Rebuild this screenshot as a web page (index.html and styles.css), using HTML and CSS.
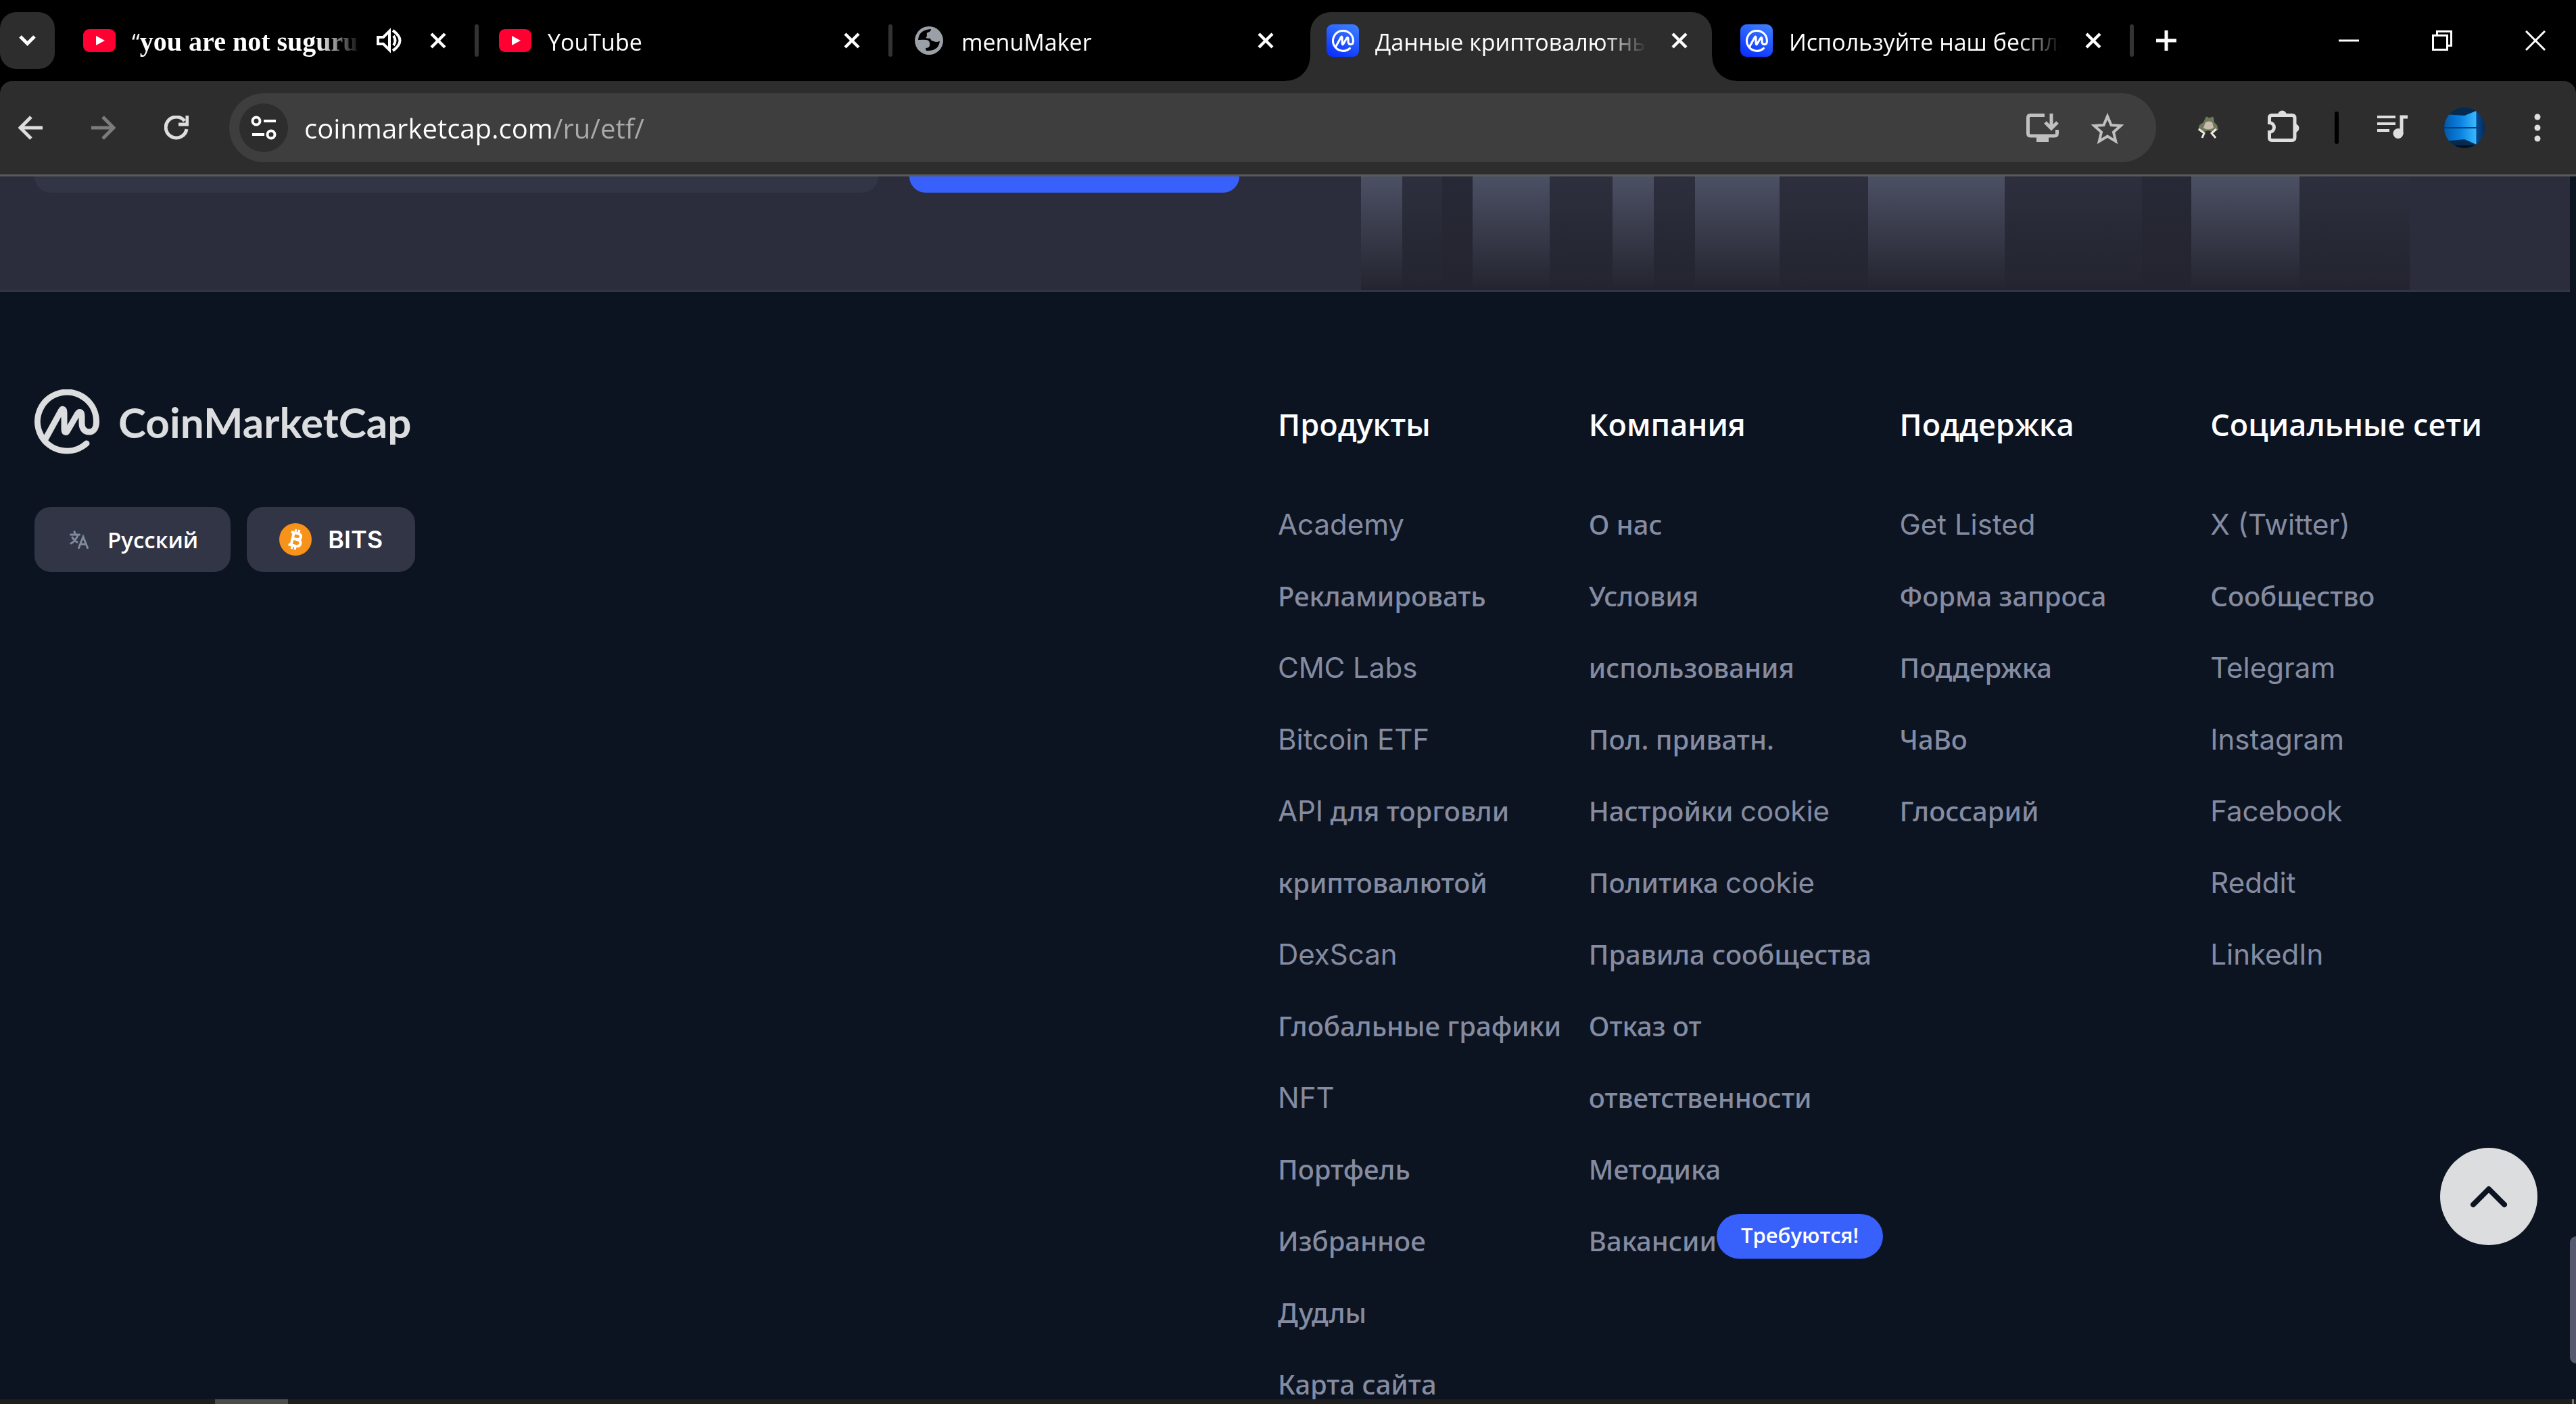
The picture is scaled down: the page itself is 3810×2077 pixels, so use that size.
FILE: index.html
```html
<!DOCTYPE html>
<html lang="ru">
<head>
<meta charset="utf-8">
<title>Данные криптовалютных ETF</title>
<link rel="stylesheet" href="styles.css">
</head>
<body>
<svg class="defs" aria-hidden="true">
  <symbol id="x" viewBox="0 0 24 24"><path d="M2 2 22 22M22 2 2 22" stroke="currentColor" stroke-width="4.5" fill="none"/></symbol>
  <symbol id="yt" viewBox="0 0 48 48"><rect y="7" width="48" height="34" rx="9" fill="#ff0033"/><path d="M19 17v14l13-7z" fill="#fff"/></symbol>
  <symbol id="mark" viewBox="0 0 96 96"><path d="M77 80A43.500 43.500 0 1 1 91.500 48c0 9-4 15-10.500 15C74 63 70 58 70 50V40c0-8-4-8-7-3L49 61c-2 4-5 3-5-2V35c0-7-3-7-5-3L17 72" fill="none" stroke="currentColor" stroke-width="9" stroke-linecap="round" stroke-linejoin="round"/></symbol>
  <linearGradient id="cmcbg" x1="0.700" y1="0" x2="0.300" y2="1"><stop offset="0" stop-color="#3a7bff"/><stop offset="1" stop-color="#0b32ff"/></linearGradient>
  <symbol id="cmc" viewBox="0 0 48 48"><rect width="48" height="48" rx="9" fill="url(#cmcbg)"/><svg x="8" y="8" width="33" height="33" color="#fff"><use href="#mark"/></svg></symbol>
</svg>

<header class="browser">
  <div class="tabstrip">
    <button class="tab-search" aria-label="Поиск вкладок"><svg width="27" height="18" viewBox="0 0 27 18"><path d="m3 3 10.500 10.500L24 3" fill="none" stroke="#fff" stroke-width="5"/></svg></button>
    <div class="tab first">
      <svg class="favicon"><use href="#yt"/></svg>
      <span class="tab-title"><span>“</span><b class="serif">you are not suguru</b></span>
      <svg class="audio" viewBox="0 0 48 48"><path d="M7 19h8l9-9v28l-9-9H7z" fill="none" stroke="#fff" stroke-width="4"/><path d="M30 17q5 7 0 14M29 9q21 15 0 30" fill="none" stroke="#fff" stroke-width="4"/></svg>
      <button class="close" aria-label="Закрыть"><svg><use href="#x"/></svg></button>
    </div>
    <div class="tab">
      <svg class="favicon"><use href="#yt"/></svg>
      <span class="tab-title">YouTube</span>
      <button class="close" aria-label="Закрыть"><svg><use href="#x"/></svg></button>
    </div>
    <div class="tab plain">
      <svg class="favicon" viewBox="0 0 48 48"><circle cx="24" cy="24" r="21" fill="#9aa0a6"/><path d="M8 23Q9 8 27 7q0 4-5 5-2 1-1 4 0 3-2 4 2 1 7 1 1 4 5 4 3 2 9 0-2 15-20 14-1-2-1-4 6 0 6-4 1-4-2-7-2-2-15-1z" fill="#000"/></svg>
      <span class="tab-title">menuMaker</span>
      <button class="close" aria-label="Закрыть"><svg><use href="#x"/></svg></button>
    </div>
    <div class="tab active">
      <svg class="favicon"><use href="#cmc"/></svg>
      <span class="tab-title">Данные криптовалютны</span>
      <button class="close" aria-label="Закрыть"><svg><use href="#x"/></svg></button>
    </div>
    <div class="tab">
      <svg class="favicon"><use href="#cmc"/></svg>
      <span class="tab-title">Используйте наш беспла</span>
      <button class="close" aria-label="Закрыть"><svg><use href="#x"/></svg></button>
    </div>
    <button class="new-tab" aria-label="Новая вкладка"><svg width="30" height="30"><path d="M15 0v30M0 15h30" stroke="#fff" stroke-width="5"/></svg></button>
    <div class="window-controls">
      <button aria-label="Свернуть"><svg width="30" height="30"><path d="M0 15h30" stroke="#fff" stroke-width="3"/></svg></button>
      <button aria-label="Восстановить"><svg width="30" height="30" fill="none" stroke="#fff" stroke-width="3"><path d="M1.500 7.500h21v21h-21zM7.500 7V1.500h21v21H23"/></svg></button>
      <button aria-label="Закрыть окно"><svg width="30" height="30"><path d="m1 1 28 28M29 1 1 29" stroke="#fff" stroke-width="3"/></svg></button>
    </div>
  </div>

  <div class="toolbar">
    <div class="nav">
      <button aria-label="Назад"><svg width="36" height="36" fill="none" stroke="#dedede" stroke-width="5"><path d="M36 18H4M19 2 3 18l16 16"/></svg></button>
      <button aria-label="Вперёд"><svg width="36" height="36" fill="none" stroke="#7c7c7c" stroke-width="5"><path d="M0 18h32M17 2l16 16-16 16"/></svg></button>
      <button aria-label="Обновить"><svg width="36" height="36" fill="none" stroke="#dedede" stroke-width="5"><path d="M33 20A15.500 15.500 0 1 1 30 8M34 0v13H21"/></svg></button>
    </div>
    <div class="omnibox">
      <button class="site-info" aria-label="Сведения о сайте"><svg width="38" height="36" fill="none" stroke="#fff" stroke-width="4"><circle cx="8" cy="8" r="5.500"/><path d="M19 8h18M2 28h18"/><circle cx="30" cy="28" r="5.500"/></svg></button>
      <input class="url" type="text" aria-label="Адрес" value="coinmarketcap.com/ru/etf/">
      <button aria-label="Установить"><svg width="48" height="42" fill="none" stroke="#c0c0c0" stroke-width="5"><path d="M27 2.500H6q-3.500 0-3.500 3.500v23q0 4 3.500 4h36q3.500 0 3.500-4v-5M37 0v22M28 13l9 9 9-9"/><path d="M15 33h18v9H15z" fill="#c0c0c0" stroke="none"/></svg></button>
      <button aria-label="Добавить в закладки"><svg width="48" height="48" viewBox="0 0 48 48" fill="none" stroke="#c0c0c0" stroke-width="4"><path d="m24 7 5.500 13 14 1-10.500 9.500 3.200 13.500L24 36.500 11.800 44 15 30.500 4.500 21l14-1z"/></svg></button>
    </div>
    <div class="extensions">
      <button aria-label="Лягушка"><svg width="33" height="36" viewBox="0 0 33 36"><path d="M13 3q2-3 4 0h4q2-3 4 0l1 7 4 4 2 7-9 3-6-2-6 2-9-3 2-7 6-4z" fill="#6f7a5c"/><path d="M13 10q5-3 10 0l2 8q-8 5-15 0z" fill="#c9bcae"/><path d="m3 20 8 6-3 7m21-13-7 6 6 7" fill="none" stroke="#f0e6e2" stroke-width="3"/></svg></button>
      <button aria-label="Расширения"><svg width="48" height="54" viewBox="0 0 48 54"><path d="M6 11.500h30q4 0 4 4v29q0 4-4 4H6q-3.500 0-3.500-4v-8a7 7 0 0 0 0-14v-7q0-4 3.500-4z" transform="translate(0 -3)" fill="none" stroke="#dedede" stroke-width="5"/><path d="M15 8a6.500 6.500 0 0 1 13 0zM40 21a6.500 6.500 0 0 1 0 13z" fill="#dedede"/></svg></button>
      <i class="divider"></i>
      <button aria-label="Медиа"><svg width="45" height="40" fill="none" stroke="#dedede" stroke-width="4"><path d="M0 4h27M0 14h27M0 24h18"/><path d="M45 4h-9v25" stroke-width="5"/><circle cx="31" cy="28.500" r="7.500" fill="#dedede" stroke="none"/></svg></button>
      <button class="avatar" aria-label="Профиль"><svg width="60" height="60"><defs><linearGradient id="av"><stop offset="0" stop-color="#0357a8"/><stop offset=".4" stop-color="#0a82e0"/><stop offset=".78" stop-color="#38b8ff"/><stop offset=".8" stop-color="#064a90"/><stop offset="1" stop-color="#032c5c"/></linearGradient><clipPath id="ac"><circle cx="30" cy="30" r="30"/></clipPath></defs><g clip-path="url(#ac)"><path d="M0 0h60v60H0z" fill="#032a50"/><path d="M0 56h60v4H0z" fill="#03101f"/><path d="M0 10 30 12 50 4l10 6v40l-12 5-18-8L0 50z" fill="url(#av)"/><path d="M0 29h48v2H0z" fill="#043a75"/></g></svg></button>
      <button aria-label="Меню"><svg width="12" height="42" fill="#dedede"><circle cx="6" cy="5" r="4.500"/><circle cx="6" cy="21" r="4.500"/><circle cx="6" cy="37" r="4.500"/></svg></button>
    </div>
  </div>
</header>

<main class="viewport">
  <section class="newsletter">
    <input class="email" type="email" aria-label="Email">
    <button class="subscribe" aria-label="Подписаться"></button>
    <svg class="bars" viewBox="0 0 1551 168" preserveAspectRatio="none" aria-hidden="true">
      <defs>
        <linearGradient id="base" x2="0" y2="1"><stop offset="0" stop-color="#2d2f3e"/><stop offset=".6" stop-color="#262934"/><stop offset="1" stop-color="#23242f"/></linearGradient>
        <linearGradient id="lit" x2="0" y2="1"><stop offset="0" stop-color="#4c5064"/><stop offset="1" stop-color="#23242f"/></linearGradient>
        <linearGradient id="dim" x2="0" y2="1"><stop offset="0" stop-color="#272936"/><stop offset="1" stop-color="#23242f"/></linearGradient>
      </defs>
      <path d="M0 0h1551v168H0z" fill="url(#base)"/>
      <path d="M120 0h45v168h-45zM1155 0h73v168h-73z" fill="url(#dim)"/>
      <path d="M0 0h61v168H0zM165 0h114v168H165zM372 0h61v168h-61zM494 0h125v168H494zM750 0h202v168H750zM1228 0h160v168h-160z" fill="url(#lit)"/>
    </svg>
  </section>

  <footer class="footer">
    <div class="brand">
      <a class="logo" href="#"><svg width="96" height="96"><use href="#mark"/></svg><span>CoinMarketCap</span></a>
      <div class="prefs">
        <button class="pref"><svg width="28" height="27" viewBox="0 0 28 27" fill="none" stroke="#808a9d" stroke-width="3" stroke-linecap="round"><path d="M1.500 6h13M7 1.500 8 5M12 7Q9 15 2 19M4 10q3 5 7 7M13.500 25.500 20 9l6.500 16.500M16 20h8"/></svg><span>Русский</span></button>
        <button class="pref bits"><svg width="48" height="48" viewBox="0 0 48 48"><circle cx="24" cy="24" r="24" fill="#f7931a"/><g transform="rotate(13 24 24)" fill="none" stroke="#fff"><path d="M15.500 14.500H25q6 0 6 4.500T25 23.500h-5.500H26q6.500 0 6.500 5T26 33.500H15.500M19.500 14.500v19" stroke-width="4"/><path d="M21.500 9v5M26.500 9v5M21.500 34v5M26.500 34v5" stroke-width="3"/></g></svg><span class="en">BITS</span></button>
      </div>
    </div>
    <nav class="links">
      <div class="col">
        <h2>Продукты</h2>
        <ul>
          <li><a class="en" href="#">Academy</a></li>
          <li><a href="#">Рекламировать</a></li>
          <li><a class="en" href="#">CMC Labs</a></li>
          <li><a class="en" href="#">Bitcoin ETF</a></li>
          <li><a href="#"><span class="en">API</span> для торговли криптовалютой</a></li>
          <li><a class="en" href="#">DexScan</a></li>
          <li><a href="#">Глобальные графики</a></li>
          <li><a class="en" href="#">NFT</a></li>
          <li><a href="#">Портфель</a></li>
          <li><a href="#">Избранное</a></li>
          <li><a href="#">Дудлы</a></li>
          <li><a href="#">Карта сайта</a></li>
        </ul>
      </div>
      <div class="col">
        <h2>Компания</h2>
        <ul>
          <li><a href="#">О нас</a></li>
          <li><a href="#">Условия использования</a></li>
          <li><a href="#">Пол. приватн.</a></li>
          <li><a href="#">Настройки <span class="en">cookie</span></a></li>
          <li><a href="#">Политика <span class="en">cookie</span></a></li>
          <li><a href="#">Правила сообщества</a></li>
          <li><a href="#">Отказ от ответственности</a></li>
          <li><a href="#">Методика</a></li>
          <li class="hiring"><a href="#">Вакансии</a><span class="badge">Требуются!</span></li>
        </ul>
      </div>
      <div class="col">
        <h2>Поддержка</h2>
        <ul>
          <li><a class="en" href="#">Get Listed</a></li>
          <li><a href="#">Форма запроса</a></li>
          <li><a href="#">Поддержка</a></li>
          <li><a href="#">ЧаВо</a></li>
          <li><a href="#">Глоссарий</a></li>
        </ul>
      </div>
      <div class="col">
        <h2>Социальные сети</h2>
        <ul>
          <li><a class="en" href="#">X (Twitter)</a></li>
          <li><a href="#">Сообщество</a></li>
          <li><a class="en" href="#">Telegram</a></li>
          <li><a class="en" href="#">Instagram</a></li>
          <li><a class="en" href="#">Facebook</a></li>
          <li><a class="en" href="#">Reddit</a></li>
          <li><a class="en" href="#">LinkedIn</a></li>
        </ul>
      </div>
    </nav>
  </footer>

  <button class="to-top" aria-label="Наверх"><svg width="54" height="33"><path d="M4 28 27 5l23 23" fill="none" stroke="#0d1421" stroke-width="8" stroke-linecap="round" stroke-linejoin="round"/></svg></button>
  <i class="scroll-thumb"></i>
</main>
<div class="taskbar"><i class="task"></i><i class="peek"></i></div>
</body>
</html>
```
FILE: styles.css
```css
* { box-sizing: border-box; }

body {
  margin: 0;
  height: 100vh;
  display: flex;
  flex-direction: column;
  overflow: hidden;
  background: #000;
  color: #fff;
  font-family: "Open Sans", "Noto Sans", sans-serif;
  font-size: 36px;
}

button {
  margin: 0;
  padding: 0;
  border: 0;
  background: none;
  color: inherit;
  font: inherit;
}

button, svg, i { display: block; flex: none; }
.defs { position: absolute; width: 0; height: 0; }

/* tab strip */
.tabstrip {
  display: flex;
  align-items: center;
  height: 120px;
  padding-right: 45px;
}
.tab-search {
  display: grid;
  place-items: center;
  width: 81px;
  height: 84px;
  margin-right: 9px;
  border-radius: 24px;
  background: #2d2d2d;
}
.tab {
  position: relative;
  display: flex;
  flex: 0 1 612px;
  align-items: center;
  min-width: 0;
  height: 102px;
  padding: 0 45px 0 33px;
}
.tab.first { flex-basis: 615px; }
.tab::after {
  content: "";
  position: absolute;
  right: -3px;
  width: 6px;
  height: 48px;
  border-radius: 3px;
  background: #333;
}
.tab.plain::after { display: none; }
.favicon { width: 48px; height: 48px; margin-right: 24px; }
.tab-title {
  flex: 1;
  min-width: 0;
  padding-top: 4px;
  overflow: hidden;
  white-space: nowrap;
  line-height: 48px;
  font-size: 34px;
  mask-image: linear-gradient(90deg, #000 calc(100% - 66px), transparent);
}
.serif { font-family: "Liberation Serif", serif; font-size: 40px; line-height: 1; }
.audio { width: 48px; height: 48px; margin-left: 18px; }
.close { margin-left: 36px; }
.close svg { width: 24px; height: 24px; }

.tab.active {
  flex-basis: 594px;
  align-self: flex-end;
  margin: 0 9px;
  padding: 0 36px 18px 24px;
  border-radius: 30px 30px 0 0;
  background: #2d2d2d;
}
.tab.active::before, .tab.active::after {
  content: "";
  position: absolute;
  bottom: 0;
  width: 36px;
  height: 36px;
  border-radius: 0;
}
.tab.active::before {
  left: -36px;
  background: radial-gradient(circle at 0 0, transparent 35px, #2d2d2d 36px);
}
.tab.active::after {
  right: -36px;
  background: radial-gradient(circle at 100% 0, transparent 35px, #2d2d2d 36px);
}
.new-tab { margin-left: 36px; }
.window-controls { display: flex; gap: 108px; margin-left: auto; }

/* toolbar */
.toolbar {
  display: flex;
  align-items: center;
  height: 141px;
  padding: 0 51px 0 27px;
  border-bottom: 3px solid #5a5a5a;
  border-radius: 18px 18px 0 0;
  background: #2d2d2d;
}
.nav { display: flex; gap: 72px; margin-right: 60px; }
.omnibox {
  display: flex;
  flex: 1;
  align-items: center;
  gap: 48px;
  height: 102px;
  padding: 0 48px 0 15px;
  border-radius: 51px;
  background: #3e3e3e;
}
.site-info {
  display: grid;
  place-items: center;
  width: 72px;
  height: 72px;
  margin-right: -24px;
  border-radius: 50%;
  background: #2d2d2d;
}
.url {
  flex: 1;
  min-width: 0;
  height: 72px;
  padding: 0;
  border: 0;
  outline: 0;
  background: linear-gradient(90deg, #fff 367px, #aaa 367px) text;
  color: transparent;
  font: 40px "Open Sans", "Noto Sans", sans-serif;
}
.extensions { display: flex; align-items: center; margin-left: 60px; }
.extensions > :nth-child(2) { margin-left: 72px; }
.divider { width: 6px; height: 48px; margin: 0 57px 0 51px; border-radius: 3px; background: #000; }
.avatar { margin: 0 72px 0 54px; }

/* page */
.viewport {
  position: relative;
  flex: 1;
  min-height: 0;
  overflow: hidden;
  padding-right: 9px;
  background: #0d1421;
}
.newsletter {
  display: flex;
  align-items: flex-start;
  height: 171px;
  padding-left: 51px;
  padding-right: 237px;
  border-bottom: 3px solid #323546;
  background: #2b2d3c;
}
.email {
  flex: 1248 1 0;
  min-width: 0;
  height: 24px;
  margin: 0 46px 0 0;
  padding: 0;
  border: 0;
  border-radius: 0 0 24px 24px;
  background: #323546;
}
.subscribe {
  flex: 488 1 0;
  height: 24px;
  margin-right: 180px;
  border-radius: 0 0 24px 24px;
  background: #3861fb;
}
.bars { flex: 1551 1 0; min-width: 0; height: 168px; }

.footer { display: flex; padding: 144px 72px 0 51px; }
.brand, .links { flex: 1 1 0; min-width: 0; }
.logo {
  display: flex;
  align-items: center;
  gap: 28px;
  color: #dcdddf;
  text-decoration: none;
  font: 700 62px/96px Lato, sans-serif;
}
.prefs { display: flex; gap: 24px; margin-top: 78px; }
.pref {
  display: flex;
  align-items: center;
  gap: 28px;
  height: 96px;
  padding: 0 48px 0 52px;
  border-radius: 24px;
  background: #323546;
  font-weight: 600;
  font-size: 33px;
}
.bits { gap: 24px; padding: 0 48px; }
.en {
  font-family: Inter, sans-serif;
  font-size: 42px;
  font-weight: 400;
  line-height: 1;
}
.pref .en { font-size: 36px; font-weight: 600; }

.links { display: grid; grid-template-columns: repeat(4, 1fr); }
.col h2 {
  margin: 19px 0 62px;
  white-space: nowrap;
  font-size: 45px;
  font-weight: 600;
  line-height: 66px;
}
.col ul { margin: 0; padding: 0; list-style: none; }
.col li {
  padding-right: 18px;
  color: #858ca2;
  font-family: "Noto Sans", "Open Sans", sans-serif;
  font-size: 40px;
  font-weight: 500;
  line-height: 106px;
}
.col a { color: inherit; text-decoration: none; }
.hiring { display: flex; align-items: center; white-space: nowrap; }
.col .badge {
  height: 66px;
  margin-bottom: 15px;
  padding: 0 36px;
  border-radius: 33px;
  background: #3861fb;
  color: #fff;
  font-family: "Open Sans", sans-serif;
  font-size: 31px;
  font-weight: 600;
  line-height: 63px;
}

.to-top {
  position: absolute;
  right: 57px;
  bottom: 228px;
  display: grid;
  place-items: center;
  width: 144px;
  height: 144px;
  border-radius: 50%;
  background: #dcdddf;
}
.scroll-thumb {
  position: absolute;
  right: 0;
  bottom: 53px;
  width: 9px;
  height: 188px;
  border-radius: 9px 0 0 9px;
  background: #555a6e;
}
.taskbar {
  display: flex;
  justify-content: space-between;
  height: 7px;
  padding: 0 3px 0 318px;
  background: #1e1e1e;
}
.task { width: 108px; background: #4c4c4c; }
.peek { width: 3px; background: #777; }
```
